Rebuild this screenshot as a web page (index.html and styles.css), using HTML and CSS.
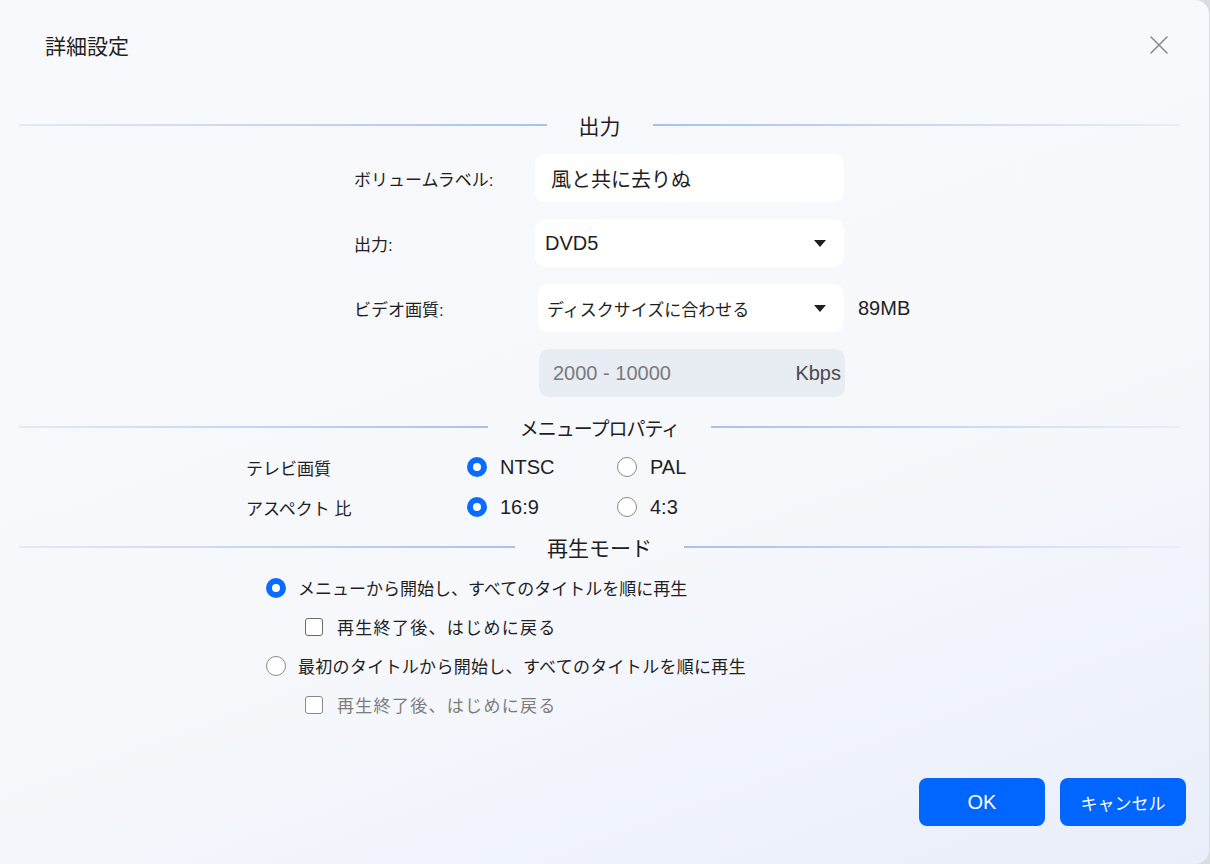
FILE: index.html
```html
<!DOCTYPE html>
<html lang="ja">
<head>
  <meta charset="UTF-8" />
  <meta name="viewport" content="width=device-width, initial-scale=1.0"/>
  <title>詳細設定</title>
  <link rel="stylesheet" href="styles.css">
</head>
<body>
<div class="dialog">
  <header class="dialog-head">
    <h1>詳細設定</h1>
    <button class="close" type="button" aria-label="閉じる">
      <svg width="20" height="20" viewBox="0 0 20 20"><path d="M2 2 L18 18 M18 2 L2 18" stroke="#8c8c8c" stroke-width="1.6" stroke-linecap="round"/></svg>
    </button>
  </header>

  <div class="divider"><span>出力</span></div>

  <div class="output-grid">
    <div class="label">ボリュームラベル:</div>
    <div class="field"><span class="big">風と共に去りぬ</span></div>
    <div></div>

    <div class="label">出力:</div>
    <div class="field select pad-s"><span class="latin">DVD5</span><i class="caret"></i></div>
    <div></div>

    <div class="label">ビデオ画質:</div>
    <div class="field select pad-s shift">ディスクサイズに合わせる<i class="caret"></i></div>
    <div class="size latin">89MB</div>

    <div></div>
    <div class="field rate"><span class="latin">2000 - 10000</span><span class="latin unit">Kbps</span></div>
    <div></div>
  </div>

  <div class="divider"><span class="kana">メニュープロパティ</span></div>

  <div class="menu-grid">
    <div class="label">テレビ画質</div>
    <div class="option"><span class="radio on"></span><span class="latin">NTSC</span></div>
    <div class="option"><span class="radio"></span><span class="latin">PAL</span></div>

    <div class="label">アスペクト 比</div>
    <div class="option"><span class="radio on"></span><span class="latin">16:9</span></div>
    <div class="option"><span class="radio"></span><span class="latin">4:3</span></div>
  </div>

  <div class="divider"><span>再生モード</span></div>

  <div class="play-list">
    <div class="option"><span class="radio on"></span>メニューから開始し、すべてのタイトルを順に再生</div>
    <div class="option sub"><span class="check"></span><span class="wide">再生終了後、はじめに戻る</span></div>
    <div class="option"><span class="radio"></span><span class="loose">最初のタイトルから開始し、すべてのタイトルを順に再生</span></div>
    <div class="option sub disabled"><span class="check"></span><span class="wide">再生終了後、はじめに戻る</span></div>
  </div>

  <footer class="actions">
    <button class="btn latin" type="button">OK</button>
    <button class="btn" type="button">キャンセル</button>
  </footer>
</div>
</body>
</html>
```

FILE: styles.css
```css
body {
  margin: 0;
  background: #d9dce3;
  font-family: "Liberation Sans", "Noto Sans CJK JP", sans-serif;
  font-size: 17px;
  color: #1f1f1f;
}

.dialog {
  width: 1209px;
  height: 864px;
  display: flex;
  flex-direction: column;
  background: linear-gradient(160deg, #f8f9fc 0%, #f6f8fc 60%, #e9eefa 100%);
  border-radius: 0 14px 14px 0;
  box-sizing: border-box;
  padding-bottom: 38px;
}

.dialog-head {
  height: 90px;
  display: flex;
  align-items: center;
  justify-content: space-between;
  padding: 0 40px 0 45px;
}

.dialog-head h1 {
  margin: 0;
  font-size: 21px;
  font-weight: 400;
}

.close {
  border: none;
  background: none;
  padding: 0;
  width: 20px;
  height: 20px;
  cursor: pointer;
}

.divider {
  height: 30px;
  display: flex;
  align-items: center;
  padding: 0 29px 0 19px;
  margin-top: 20px;
}

.divider::before,
.divider::after {
  content: "";
  flex: 1;
  height: 2px;
}

.divider::before {
  background: linear-gradient(90deg, #e4e9f3, #a8c2ef);
}

.divider::after {
  background: linear-gradient(90deg, #a8c2ef, #e9edf6);
}

.divider span {
  margin: 0 32px;
  font-size: 21px;
  font-weight: 400;
}

.divider span.kana {
  font-size: 19px;
  letter-spacing: -1px;
}

.latin {
  font-size: 20px;
}

.big {
  font-size: 20px;
}

.output-grid {
  display: grid;
  grid-template-columns: 181px 309px auto;
  grid-auto-rows: 48px;
  row-gap: 17px;
  padding-left: 354px;
  margin-top: 14px;
}

.label {
  display: flex;
  align-items: center;
}

.field {
  display: flex;
  align-items: center;
  background: #fff;
  border-radius: 10px;
  padding: 0 16px;
}

.field.pad-s {
  padding: 0 18px 0 10px;
}

.field.shift {
  margin-left: 3px;
  padding-left: 9px;
}

.select {
  justify-content: space-between;
}

.caret {
  width: 0;
  height: 0;
  border-left: 6px solid transparent;
  border-right: 6px solid transparent;
  border-top: 7px solid #1f1f1f;
}

.size {
  display: flex;
  align-items: center;
  padding-left: 14px;
}

.rate {
  margin-left: 4px;
  width: 306px;
  box-sizing: border-box;
  background: #e8ecf3;
  color: #7a7a7a;
  justify-content: space-between;
  padding: 0 4px 0 14px;
}

.rate .unit {
  color: #4a4a4a;
}

.output-grid + .divider {
  margin-top: 15px;
}

.menu-grid + .divider {
  margin-top: 5px;
}

.menu-grid {
  display: grid;
  grid-template-columns: 221px 150px auto;
  grid-auto-rows: 40px;
  padding-left: 246px;
  margin-top: 5px;
}

.option {
  display: flex;
  align-items: center;
  gap: 13px;
}

.radio {
  width: 20px;
  height: 20px;
  box-sizing: border-box;
  border-radius: 50%;
  border: 1.5px solid #8a8a8a;
  background: #fff;
  flex: none;
}

.radio.on {
  border: 6px solid #0a6bff;
}

.play-list {
  display: flex;
  flex-direction: column;
  padding-left: 266px;
  margin-top: 6px;
}

.play-list .option {
  height: 39px;
  gap: 12px;
}

.play-list .sub {
  padding-left: 39px;
  gap: 14px;
}

.wide {
  letter-spacing: 1.3px;
}

.loose {
  letter-spacing: 0.3px;
}

.check {
  width: 18px;
  height: 18px;
  box-sizing: border-box;
  border: 1.5px solid #6b6b6b;
  border-radius: 3px;
  background: #fff;
  flex: none;
}

.disabled {
  color: #7d7d7d;
}

.disabled .check {
  border-color: #8a8a8a;
}

.actions {
  margin-top: auto;
  display: flex;
  justify-content: flex-end;
  gap: 15px;
  padding-right: 23px;
}

.btn {
  width: 126px;
  height: 48px;
  border: none;
  border-radius: 8px;
  background: #0066ff;
  color: #fff;
  font-family: "Liberation Sans", "Noto Sans CJK JP", sans-serif;
  font-size: 17px;
  cursor: pointer;
}

.btn.latin {
  font-size: 20px;
}
```
